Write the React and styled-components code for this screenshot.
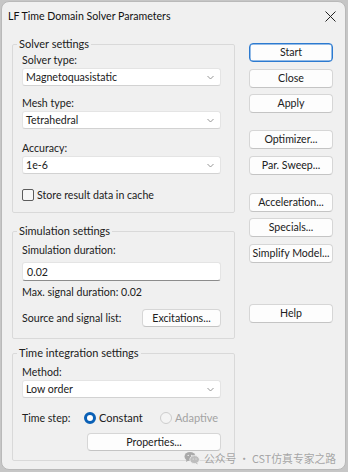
import React from "react";
import styled, { createGlobalStyle } from "styled-components";

const Global = createGlobalStyle`
  html, body { margin: 0; padding: 0; }
  body {
    background: #c6c6c6;
    width: 348px;
    height: 472px;
    overflow: hidden;
    font-family: "Lato", "Noto Sans", sans-serif;
  }
`;

const Dialog = styled.div`
  position: relative;
  box-sizing: border-box;
  margin: 1px 0 0 1px;
  width: 345px;
  height: 469px;
  background: #f0f0f0;
  border: 1px solid #b9b9b9;
  border-radius: 8px;
  overflow: hidden;
  color: #202020;
  font-size: 10.6px;
`;

const TitleBar = styled.div`
  height: 28px;
  display: flex;
  align-items: center;
  justify-content: space-between;
  padding: 0 8px 0 6px;
  font-size: 10.6px;
  color: #111;
`;

const CloseX = styled.svg`
  width: 11px;
  height: 11px;
  margin-right: 1px;
`;

const Body = styled.div`
  display: flex;
  gap: 14px;
  padding: 7px 0 0 10px;
`;

const LeftCol = styled.div`
  width: 223px;
  display: flex;
  flex-direction: column;
`;

const Group = styled.fieldset`
  box-sizing: border-box;
  margin: ${(p) => p.$mt || 0}px 0 0 0;
  padding: ${(p) => p.$pt || 2}px 13px ${(p) => p.$pb || 10}px 9px;
  border: 1px solid #d9d9d9;
  border-radius: 2px;
  min-width: 0;
  display: flex;
  flex-direction: column;
`;

const Legend = styled.legend`
  margin-left: -5px;
  padding: 0 2px;
  font-size: 11px;
  line-height: 14px;
`;

const Label = styled.div`
  line-height: 14px;
  height: 14px;
  white-space: nowrap;
  margin-top: ${(p) => p.$mt || 0}px;
`;

const SelectBox = styled.div`
  box-sizing: border-box;
  height: 18px;
  margin-top: 1px;
  background: #fff;
  border: 1px solid #e4e4e4;
  border-bottom-color: #d2d2d2;
  border-radius: 3px;
  display: flex;
  align-items: center;
  justify-content: space-between;
  padding: 0 6px 0 3px;
`;

const Chevron = styled.svg`
  width: 7px;
  height: 5px;
`;

const Select = ({ value }) => (
  <SelectBox>
    <span>{value}</span>
    <Chevron viewBox="0 0 7 5">
      <polyline points="0.5,1 3.5,4 6.5,1" fill="none" stroke="#8a8a8a" strokeWidth="0.9" />
    </Chevron>
  </SelectBox>
);

const TextInput = styled.div`
  box-sizing: border-box;
  height: 19px;
  margin-top: 5px;
  background: #fff;
  border: 1px solid #e4e4e4;
  border-bottom: 1px solid #8c8c8c;
  border-radius: 3px;
  display: flex;
  align-items: center;
  padding: 0 4px;
`;

const CheckRow = styled.label`
  display: flex;
  align-items: center;
  gap: 3px;
  height: 14px;
  margin-top: 14px;
  line-height: 14px;
`;

const CheckBox = styled.span`
  box-sizing: border-box;
  width: 12px;
  height: 12px;
  border: 1px solid #5c5c5c;
  border-radius: 2px;
  background: #f7f7f7;
`;

const Row = styled.div`
  display: flex;
  align-items: center;
  white-space: nowrap;
  justify-content: ${(p) => p.$justify || "flex-start"};
  margin-top: ${(p) => p.$mt || 0}px;
  line-height: 14px;
`;

const RowLabel = styled.span`
  width: ${(p) => p.$w}px;
  flex: none;
`;

const Button = styled.button`
  box-sizing: border-box;
  width: ${(p) => p.$w || 84}px;
  height: ${(p) => p.$h || 19}px;
  padding: 0;
  white-space: nowrap;
  background: #fdfdfd;
  border: 1px solid ${(p) => (p.$primary ? "#2c7ad0" : "#d6d6d6")};
  border-bottom-color: ${(p) => (p.$primary ? "#2c7ad0" : "#c4c4c4")};
  box-shadow: ${(p) => (p.$primary ? "inset 0 0 0 0.5px #2c7ad0" : "none")};
  border-radius: 4px;
  font-family: inherit;
  font-size: 10.6px;
  color: #202020;
  line-height: 1;
`;

const Radio = styled.span`
  box-sizing: border-box;
  width: 12px;
  height: 12px;
  border-radius: 50%;
  margin-right: 3px;
  background: ${(p) => (p.$checked ? "#fff" : "#f4f4f4")};
  border: ${(p) => (p.$checked ? "3.5px solid #0a60b6" : "1px solid #cdcdcd")};
`;

const RadioLabel = styled.span`
  display: flex;
  align-items: center;
  width: ${(p) => (p.$w ? `${p.$w}px` : "auto")};
  font-size: 11px;
  color: ${(p) => (p.$disabled ? "#a3a3a3" : "inherit")};
`;

const RightCol = styled.div`
  display: flex;
  flex-direction: column;
  padding-top: 6px;
`;

const ButtonStack = styled.div`
  display: flex;
  flex-direction: column;
  gap: 6.5px;
  margin-top: ${(p) => p.$mt || 0}px;
`;

const Watermark = styled.div`
  position: absolute;
  left: 182px;
  top: 448px;
  display: flex;
  align-items: center;
  gap: 4px;
  white-space: nowrap;
  font-family: "Noto Sans CJK SC", "Noto Sans", sans-serif;
  font-size: 10.8px;
  color: rgba(150, 150, 150, 0.85);
`;

const WeChat = () => (
  <svg width="16" height="14" viewBox="0 0 16 14">
    <ellipse cx="6" cy="5.5" rx="5.5" ry="4.6" fill="#a9a9a9" />
    <path d="M2.5 8.8 L2 11 L4.6 9.6 Z" fill="#a9a9a9" />
    <ellipse cx="10.6" cy="8.6" rx="4.8" ry="4" fill="#bdbdbd" stroke="#f0f0f0" strokeWidth="0.8" />
    <path d="M13 11.8 L14 13.5 L11.6 12.4 Z" fill="#bdbdbd" />
    <circle cx="4.2" cy="4.4" r="0.7" fill="#f0f0f0" />
    <circle cx="7.8" cy="4.4" r="0.7" fill="#f0f0f0" />
    <circle cx="9.2" cy="8" r="0.55" fill="#f0f0f0" />
    <circle cx="12" cy="8" r="0.55" fill="#f0f0f0" />
  </svg>
);

export default function App() {
  return (
    <>
      <Global />
      <Dialog>
        <TitleBar>
          <span>LF Time Domain Solver Parameters</span>
          <CloseX viewBox="0 0 11 11">
            <path d="M0.5 0.5 L10.5 10.5 M10.5 0.5 L0.5 10.5" stroke="#222" strokeWidth="1" />
          </CloseX>
        </TitleBar>
        <Body>
          <LeftCol>
            <Group $pt={2} $pb={10}>
              <Legend>Solver settings</Legend>
              <Label>Solver type:</Label>
              <Select value="Magnetoquasistatic" />
              <Label $mt={10}>Mesh type:</Label>
              <Select value="Tetrahedral" />
              <Label $mt={12}>Accuracy:</Label>
              <Select value="1e-6" />
              <CheckRow>
                <CheckBox />
                <span>Store result data in cache</span>
              </CheckRow>
            </Group>
            <Group $mt={11} $pt={5} $pb={11}>
              <Legend>Simulation settings</Legend>
              <Label>Simulation duration:</Label>
              <TextInput>0.02</TextInput>
              <Label $mt={4}>Max. signal duration: 0.02</Label>
              <Row $mt={10} $justify="space-between">
                <span>Source and signal list:</span>
                <Button $w={79} $h={18}>Excitations...</Button>
              </Row>
            </Group>
            <Group $mt={7} $pt={5} $pb={9}>
              <Legend>Time integration settings</Legend>
              <Label>Method:</Label>
              <Select value="Low order" />
              <Row $mt={13}>
                <RowLabel $w={62}>Time step:</RowLabel>
                <RadioLabel $w={76}>
                  <Radio $checked />
                  Constant
                </RadioLabel>
                <RadioLabel $disabled>
                  <Radio />
                  Adaptive
                </RadioLabel>
              </Row>
              <Row $mt={8} $justify="flex-end">
                <Button $w={134} $h={18}>Properties...</Button>
              </Row>
            </Group>
          </LeftCol>
          <RightCol>
            <ButtonStack>
              <Button $primary>Start</Button>
              <Button>Close</Button>
              <Button>Apply</Button>
            </ButtonStack>
            <ButtonStack $mt={17}>
              <Button>Optimizer...</Button>
              <Button>Par. Sweep...</Button>
            </ButtonStack>
            <ButtonStack $mt={18}>
              <Button>Acceleration...</Button>
              <Button>Specials...</Button>
              <Button>Simplify Model...</Button>
            </ButtonStack>
            <ButtonStack $mt={41}>
              <Button>Help</Button>
            </ButtonStack>
          </RightCol>
        </Body>
        <Watermark>
          <WeChat />
          <span>公众号 · CST仿真专家之路</span>
        </Watermark>
      </Dialog>
    </>
  );
}
